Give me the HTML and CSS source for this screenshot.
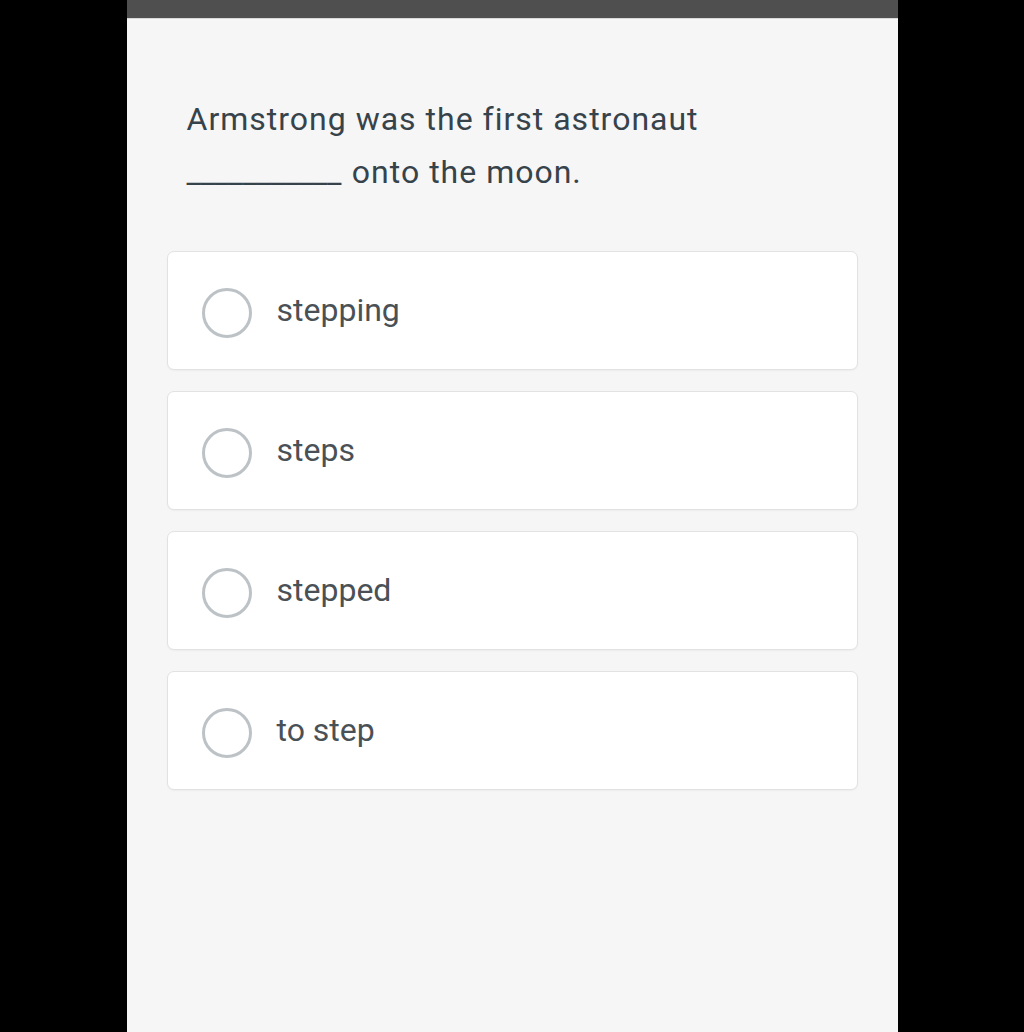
FILE: index.html
```html
<!DOCTYPE html>
<html lang="en">
<head>
    <meta charset="UTF-8">
    <meta name="viewport" content="width=device-width, initial-scale=1.0">
    <title>Quiz</title>
    <link rel="stylesheet" href="styles.css">
</head>
<body>
    <div class="screen">
        <div class="top-bar"></div>
        <div class="question">
            Armstrong was the first astronaut<br>
            <span class="blank">___________</span> onto the moon.
        </div>
        <ul class="options">
            <li class="option"><span class="radio"></span><span class="label">stepping</span></li>
            <li class="option"><span class="radio"></span><span class="label">steps</span></li>
            <li class="option"><span class="radio"></span><span class="label">stepped</span></li>
            <li class="option"><span class="radio"></span><span class="label">to step</span></li>
        </ul>
    </div>
</body>
</html>
```

FILE: styles.css
```css
*{
    margin: 0;
    padding: 0;
    box-sizing: border-box;
}
body{
    background: #000;
    font-family: Roboto, "Liberation Sans", sans-serif;
}
.screen{
    width: 771px;
    height: 1032px;
    margin: 0 auto;
    background: #f6f6f6;
}
.top-bar{
    height: 19px;
    background: #4f4f4f;
    border-bottom: 1px solid #d9d9d9;
}
.question{
    padding: 74px 60px 0 60px;
    font-size: 32px;
    line-height: 53px;
    letter-spacing: 1px;
    color: #37434b;
}
.blank{
    letter-spacing: -0.4px;
    margin-right: 2px;
}
.options{
    list-style: none;
    padding: 52px 40px 0 40px;
    display: flex;
    flex-direction: column;
    gap: 21px;
}
.option{
    height: 119px;
    background: #fff;
    border: 1px solid #e2e2e2;
    border-radius: 7px;
    box-shadow: 0 1px 2px rgba(0,0,0,0.04);
    display: flex;
    align-items: center;
    padding-left: 34px;
}
.radio{
    width: 50px;
    height: 50px;
    border: 3px solid #bcc2c6;
    border-radius: 50%;
    margin-top: 4px;
    margin-right: 25px;
}
.label{
    font-size: 32px;
    color: #4a5156;
    margin-top: -2px;
}
```
